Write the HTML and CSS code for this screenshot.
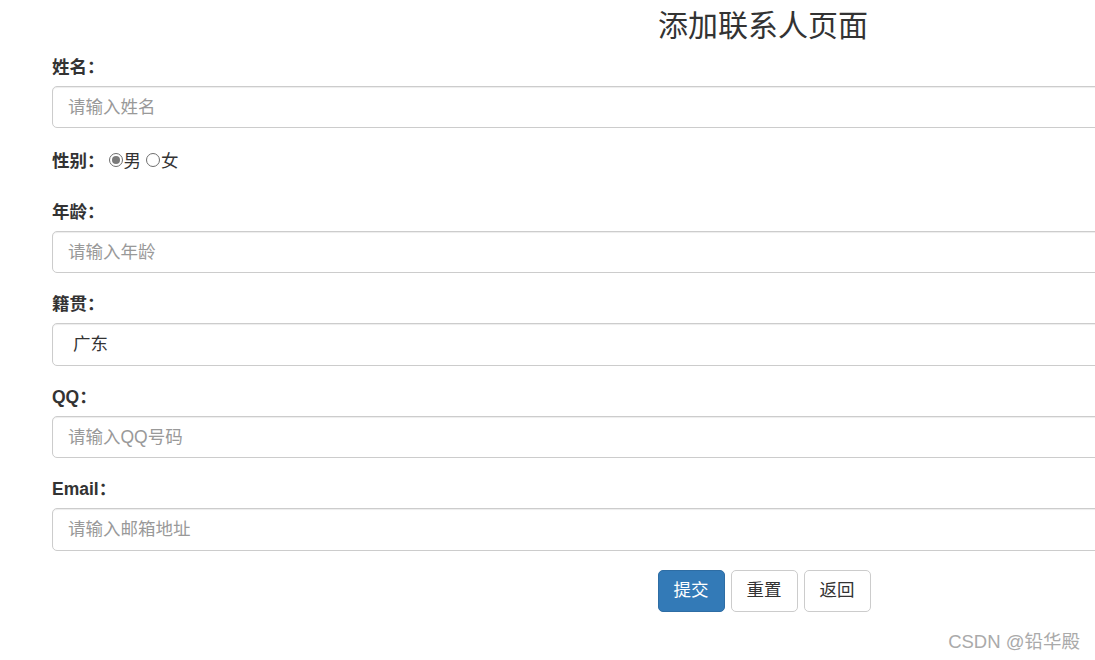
FILE: index.html
```html
<!DOCTYPE html>
<html lang="zh-CN">
<head>
<meta charset="utf-8">
<title>添加联系人页面</title>
<link rel="stylesheet" href="styles.css">
</head>
<body>
<div class="container">
  <h3 class="title">添加联系人页面</h3>
  <form class="form">
    <div class="form-group">
      <label class="label">姓名：</label>
      <input class="form-control" type="text" placeholder="请输入姓名">
    </div>
    <div class="radio-row">
      <label class="label inline">性别：</label>
      <input class="radio" type="radio" name="sex" checked><span class="opt">男</span>
      <input class="radio" type="radio" name="sex"><span class="opt">女</span>
    </div>
    <div class="form-group">
      <label class="label">年龄：</label>
      <input class="form-control" type="text" placeholder="请输入年龄">
    </div>
    <div class="form-group">
      <label class="label">籍贯：</label>
      <select class="form-control select">
        <option>广东</option>
        <option>广西</option>
        <option>湖南</option>
      </select>
    </div>
    <div class="form-group">
      <label class="label">QQ：</label>
      <input class="form-control" type="text" placeholder="请输入QQ号码">
    </div>
    <div class="form-group">
      <label class="label">Email：</label>
      <input class="form-control" type="text" placeholder="请输入邮箱地址">
    </div>
    <div class="form-group actions">
      <button class="btn btn-primary" type="button">提交</button>
      <button class="btn btn-default" type="reset">重置</button>
      <button class="btn btn-default" type="button">返回</button>
    </div>
  </form>
</div>
<div class="watermark">CSDN @铅华殿</div>
</body>
</html>
```
FILE: styles.css
```css
html, body {
  margin: 0;
  padding: 0;
  width: 1095px;
  height: 660px;
  overflow: hidden;
  background: #fff;
}
body {
  position: relative;
  font-family: "Liberation Sans", "Noto Sans CJK SC", sans-serif;
  font-size: 17.5px;
  line-height: 25px;
  color: #333;
}
.container {
  width: 1422px;
  margin-left: 37px;
  padding: 0 15px;
}
.title {
  margin: 9px 0 12.5px;
  font-size: 30px;
  line-height: 33px;
  font-weight: normal;
  text-align: center;
  color: #333;
}
.form-group {
  margin-bottom: 18.75px;
}
.label {
  display: block;
  font-weight: bold;
  margin-bottom: 6.25px;
  line-height: 25px;
}
.label.inline {
  display: inline-block;
  margin: 0 4px 0 0;
}
.form-control {
  display: block;
  box-sizing: border-box;
  width: 100%;
  height: 42.5px;
  margin: 0;
  padding: 7.5px 15px;
  font-family: inherit;
  font-size: 17.5px;
  line-height: 25px;
  color: #555;
  background: #fff;
  border: 1.25px solid #ccc;
  border-radius: 5px;
  box-shadow: inset 0 1px 1px rgba(0, 0, 0, .075);
  outline: none;
}
.form-control::placeholder {
  color: #999;
}
.select {
  appearance: none;
  -webkit-appearance: none;
  padding-left: 20px;
  color: #333;
}
.radio-row {
  display: flex;
  align-items: center;
  height: 25px;
  padding-top: 2px;
  margin-bottom: 25.5px;
}
.radio {
  appearance: none;
  -webkit-appearance: none;
  box-sizing: border-box;
  width: 14px;
  height: 14px;
  margin: 0 1px 3px 0;
  border: 1px solid #6e6e6e;
  border-radius: 50%;
  background: #fff;
  position: relative;
}
.radio:checked::after {
  content: "";
  position: absolute;
  left: 2px;
  top: 2px;
  width: 8px;
  height: 8px;
  border-radius: 50%;
  background: #7a7a7a;
}
.opt {
  margin-right: 5px;
}
.actions {
  display: flex;
  justify-content: center;
  gap: 6px;
  padding-left: 2px;
}
.btn {
  box-sizing: border-box;
  height: 42.5px;
  padding: 7.5px 15px;
  font-family: inherit;
  font-size: 17.5px;
  line-height: 25px;
  border: 1.25px solid #ccc;
  border-radius: 5px;
  cursor: pointer;
}
.btn-primary {
  background: #337ab7;
  border-color: #2e6da4;
  color: #fff;
}
.btn-default {
  background: #fff;
  color: #333;
}
.watermark {
  position: absolute;
  right: 15px;
  bottom: 7px;
  font-size: 18.5px;
  line-height: 22px;
  color: #aaa;
}
```
